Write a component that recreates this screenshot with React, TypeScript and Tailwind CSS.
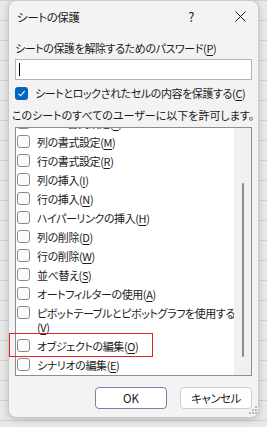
import React from "react";

const items: { label: string; key: string; br?: boolean }[] = [
  { label: "セルの書式設定", key: "F" },
  { label: "列の書式設定", key: "M" },
  { label: "行の書式設定", key: "R" },
  { label: "列の挿入", key: "I" },
  { label: "行の挿入", key: "N" },
  { label: "ハイパーリンクの挿入", key: "H" },
  { label: "列の削除", key: "D" },
  { label: "行の削除", key: "W" },
  { label: "並べ替え", key: "S" },
  { label: "オートフィルターの使用", key: "A" },
  { label: "ピボットテーブルとピボットグラフを使用する", key: "V", br: true },
  { label: "オブジェクトの編集", key: "O" },
  { label: "シナリオの編集", key: "E" },
];

function Key({ k }: { k: string }) {
  return (
    <>
      (<span className="underline underline-offset-2">{k}</span>)
    </>
  );
}

function Box({ checked }: { checked?: boolean }) {
  if (checked) {
    return (
      <div className="w-[13px] h-[13px] rounded-[3px] bg-[#0067c0] flex items-center justify-center shrink-0">
        <svg width="9" height="9" viewBox="0 0 9 9">
          <path d="M1.5 4.8 L3.6 6.8 L7.6 2.2" fill="none" stroke="white" strokeWidth="1.1" />
        </svg>
      </div>
    );
  }
  return <div className="w-[13px] h-[13px] rounded-[3px] border border-[#8b8b8b] bg-[#fbfbfb] shrink-0" />;
}

export default function App() {
  return (
    <div
      className="relative w-[267px] h-[427px] overflow-hidden bg-[#e8e8e8] bg-[linear-gradient(#d2d2d2_1px,transparent_1px)] bg-[size:100%_20px] pl-[8px] text-[11px] tracking-[-0.4px] text-[#1b1b1b] [font-feature-settings:'palt'] font-['Noto_Sans_CJK_JP','Noto_Sans',sans-serif]"
    >
      <div className="w-[251px] h-[418px] rounded-[8px] bg-[#f3f3f3] border border-[#c9c9c9] shadow-[0_2px_6px_rgba(0,0,0,0.18)] flex flex-col">
        <div className="h-[31px] flex items-center pl-[8px] pr-[12px]">
          <span className="leading-[16px] text-[11.5px] text-[#1b1b1b]">シートの保護</span>
          <span className="ml-auto mr-[41px] text-[13px]">?</span>
          <svg width="11" height="11" viewBox="0 0 11 11">
            <path d="M0.5 0.5 L10.5 10.5 M10.5 0.5 L0.5 10.5" stroke="#1b1b1b" strokeWidth="1" />
          </svg>
        </div>
        <div className="px-[6px] flex flex-col">
          <div className="mt-[8px] leading-[16px] whitespace-nowrap">
            シートの保護を解除するためのパスワード<Key k="P" />
          </div>
          <div className="mt-[3px] h-[21px] bg-white border border-[#b4b4b4] flex items-center pl-[3px]">
            <div className="w-[1px] h-[13px] bg-black" />
          </div>
          <div className="mt-[5px] h-[16px] flex items-center gap-[7px] whitespace-nowrap">
            <Box checked />
            <span className="leading-[16px]">
              シートとロックされたセルの内容を保護する<Key k="C" />
            </span>
          </div>
          <div className="mt-[6px] -ml-[3px] leading-[16px] whitespace-nowrap tracking-[0px]">
            このシートのすべてのユーザーに以下を許可します。
          </div>
          <div className="mt-[4px] h-[249px] border border-[#8e8e8e] bg-white flex overflow-hidden">
            <div className="flex-1 overflow-hidden">
              <div className="-mt-[15px] flex flex-col">
                {items.map((it) => (
                  <div key={it.key} className="flex items-start gap-[7px] pl-[1px] py-[2.5px] leading-[14px] whitespace-nowrap">
                    <div className="h-[14px] flex items-center">
                      <Box />
                    </div>
                    <span>
                      {it.label}
                      {it.br && <br />}
                      <Key k={it.key} />
                    </span>
                  </div>
                ))}
              </div>
            </div>
            <div className="w-[17px] bg-[#f0f0f0] flex justify-center">
              <div className="mt-[55px] w-[2px] h-[174px] bg-[#8a8a8a] rounded-full" />
            </div>
          </div>
          <div className="mt-[11px] flex justify-end gap-[13px] tracking-normal text-[11.5px]">
            <button className="w-[72px] h-[22px] rounded-[4px] bg-white border border-[#6f86a6] leading-[16px]">OK</button>
            <button className="w-[72px] h-[22px] rounded-[4px] bg-white border border-[#cfcfcf] leading-[16px] tracking-[-0.5px]">キャンセル</button>
          </div>
          <div className="flex justify-end mt-[-3px] -mr-[5px]">
            <svg width="8" height="8" viewBox="0 0 8 8">
              <rect x="6" y="0" width="2" height="2" fill="#b9b9b9" />
              <rect x="3" y="3" width="2" height="2" fill="#b9b9b9" />
              <rect x="6" y="3" width="2" height="2" fill="#b9b9b9" />
              <rect x="0" y="6" width="2" height="2" fill="#b9b9b9" />
              <rect x="3" y="6" width="2" height="2" fill="#b9b9b9" />
              <rect x="6" y="6" width="2" height="2" fill="#b9b9b9" />
            </svg>
          </div>
        </div>
      </div>
      <div className="absolute left-[9px] top-[333px] w-[144px] h-[24px] border border-[#e0242a]" />
    </div>
  );
}
